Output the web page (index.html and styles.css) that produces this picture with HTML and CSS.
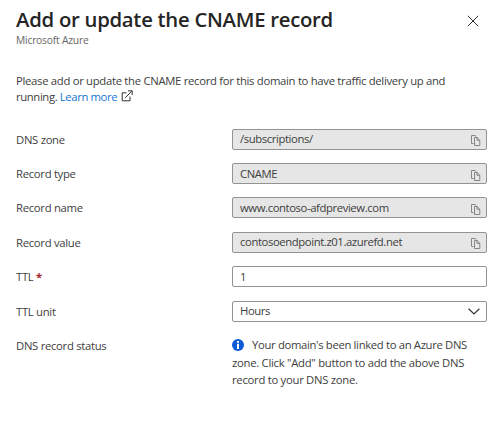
FILE: index.html
```html
<!DOCTYPE html>
<html lang="en">
<head>
<meta charset="utf-8">
<title>Add or update the CNAME record</title>
<link rel="stylesheet" href="styles.css">
</head>
<body>
<svg class="defs" aria-hidden="true">
  <symbol id="copy" viewBox="0 0 11 12">
    <path d="M3.5 9.5H1.5V1.5H5L6.3 2.5M4.5 3.5H7.1L9.8 6.2V11.5H4.5ZM7 3.5V6.3H9.8"/>
  </symbol>
</svg>
<main class="panel">
  <header class="header">
    <div>
      <h1 class="title">Add or update the CNAME record</h1>
      <p class="subtitle">Microsoft Azure</p>
    </div>
    <button class="close" aria-label="Close"><svg viewBox="0 0 12 12"><path d="M.8.8 11.2 11.2M11.2.8.8 11.2"/></svg></button>
  </header>
  <p class="intro">Please add or update the CNAME record for this domain to have traffic delivery up and<br><span class="second">running. <a class="link">Learn more</a> <svg class="external" viewBox="0 0 12 12"><path d="M5.5 2.8H1.2V10.8H9V6.5M4.3 7.7 10.8 1.2M7 .8H11.2V5"/></svg></span></p>
  <div class="form">
    <div class="row"><span class="label">DNS zone</span><div class="field locked"><span class="value">/subscriptions/</span><svg class="copy"><use href="#copy"/></svg></div></div>
    <div class="row"><span class="label">Record type</span><div class="field locked"><span class="value">CNAME</span><svg class="copy"><use href="#copy"/></svg></div></div>
    <div class="row"><span class="label">Record name</span><div class="field locked"><span class="value">www.contoso-afdpreview.com</span><svg class="copy"><use href="#copy"/></svg></div></div>
    <div class="row"><span class="label">Record value</span><div class="field locked"><span class="value">contosoendpoint.z01.azurefd.net</span><svg class="copy"><use href="#copy"/></svg></div></div>
    <div class="row"><span class="label">TTL <b class="required">*</b></span><div class="field"><span class="value">1</span></div></div>
    <div class="row"><span class="label">TTL unit</span><div class="field"><span class="value">Hours</span><svg class="chevron" viewBox="0 0 12 7"><path d="M.6.7 6 6 11.4.7"/></svg></div></div>
    <div class="row status"><span class="label">DNS record status</span><p class="message"><svg class="info" viewBox="0 0 12 12"><circle cx="6" cy="6" r="6"/><path d="M5 2H7V3.7H5ZM5 4.8H7V10H5Z"/></svg><span class="lead">Your domain's been linked to an Azure DNS</span><br>zone. Click "Add" button to add the above DNS<br>record to your DNS zone.</p></div>
  </div>
</main>
</body>
</html>
```

FILE: styles.css
```css
* { box-sizing: border-box; }
body { margin: 0; background: #fff; color: #404040; font: 11.3px/16px "Open Sans", "Noto Sans", sans-serif; }
svg { fill: none; stroke: currentColor; }
.defs { display: none; }
.panel { width: 500px; height: 421px; padding: 6px 13px 0 16px; white-space: nowrap; }
.header { display: flex; justify-content: space-between; height: 67px; }
.title { margin: 0; color: #252525; font-size: 20.3px; line-height: 27px; font-weight: 600; letter-spacing: -.26px; }
.subtitle { margin: 0; color: #666; font-size: 10.3px; line-height: 15px; letter-spacing: -.22px; }
.close { width: 12px; height: 12px; margin: 9px 8px 0 0; padding: 0; border: 0; background: none; color: #333; }
.close svg { display: block; width: 12px; height: 12px; }
.intro { margin: 0; height: 49px; letter-spacing: -.3px; }
.second { letter-spacing: -.38px; }
.link { color: #1677d2; }
.external { width: 12px; height: 12px; margin-left: 1px; vertical-align: -1px; color: #333; }
.row { display: grid; grid-template-columns: 216px 255px; height: 34.4px; align-items: center; }
.label { padding-top: 1px; letter-spacing: -.3px; }
.required { color: #a4262c; }
.field { display: flex; align-items: center; justify-content: space-between; height: 21px; padding: 0 5px 0 7px; border: 1px solid #939393; border-radius: 2px; letter-spacing: -.4px; }
.locked { background: #e6e6e6; }
.copy { width: 11px; height: 12px; margin-top: 2px; color: #858585; }
.chevron { width: 12px; height: 7px; margin-right: 1px; color: #333; stroke-width: 1.2; }
.status { align-items: start; padding-top: 8px; }
.message { margin: 0; line-height: 17.4px; letter-spacing: -.28px; }
.lead { letter-spacing: -.34px; }
.status .label { line-height: 17px; }
.info { width: 12px; height: 12px; margin-right: 8px; vertical-align: -2px; fill: #0f5bd7; stroke: none; }
.info path { fill: #fff; }
```
